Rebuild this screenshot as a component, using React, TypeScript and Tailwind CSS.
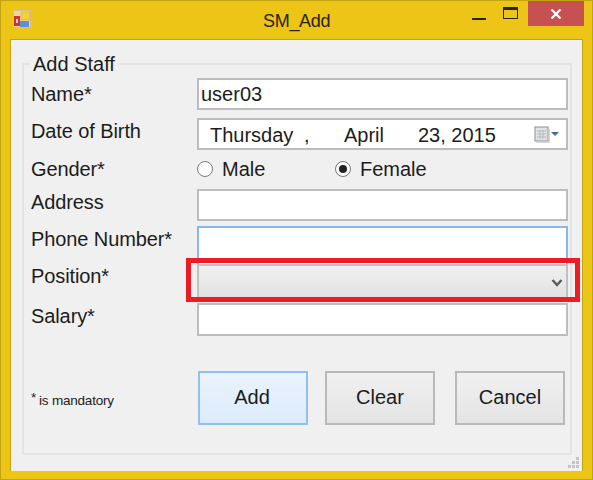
import React from "react";

const font = { fontFamily: '"Liberation Sans", Arial, sans-serif' };

function Row({ label, labelOffset, gap, height, children }: { label: string; labelOffset: string; gap: string; height: string; children: React.ReactNode }) {
  return (
    <div className={`flex ${gap} ${height}`}>
      <div className={`w-[166px] text-[20px] leading-[24px] text-[#1c1c1c] whitespace-nowrap tracking-[-0.1px] ${labelOffset}`}>{label}</div>
      <div className="w-[371px] h-full">{children}</div>
    </div>
  );
}

const box = "w-full h-full bg-white border-2 border-[#bcbcc0]";

export default function App() {
  return (
    <div style={font} className="relative w-[593px] h-[480px] bg-[#ecc517] border border-[#c2a312] flex flex-col overflow-hidden">
      <div className="h-[38px] flex items-start shrink-0">
        <svg className="ml-[12px] mt-[9px]" width="20" height="18" viewBox="0 0 20 18">
          <rect x="0.5" y="0.5" width="17" height="17" fill="#e6d9a0" stroke="#cfc48e" />
          <rect x="1" y="6" width="6" height="10" fill="#c9343a" />
          <rect x="3" y="9" width="2" height="4" fill="#f3c8c8" />
          <rect x="8" y="2" width="9" height="8" fill="#f5cf3e" stroke="#d6a920" strokeWidth="0.5" />
          <rect x="7" y="11" width="9" height="6" fill="#5d8fdc" />
        </svg>
        <div className="ml-[230px] mt-[9px] w-[80px] text-[18px] leading-[22px] text-[#2b2410] tracking-[-0.3px]">SM_Add</div>
        <div className="ml-[129px] mt-[17px] w-[14px] h-[2px] bg-[#2a2410]" />
        <div className="ml-[17px] mt-[6px] w-[15px] h-[12px] border border-[#2a2410] border-t-[3px]" />
        <div className="ml-[10px] mt-0 w-[56px] h-[25px] bg-[#c75050] flex items-center justify-center">
          <svg width="12" height="10" viewBox="0 0 12 10"><path d="M1.5 0.5 L10.5 9.5 M10.5 0.5 L1.5 9.5" stroke="#fff" strokeWidth="2.2" /></svg>
        </div>
      </div>

      <div className="ml-[9px] mr-[9px] h-[432px] bg-[#f0f0f0] border-t border-l border-r border-[#c2a312] pt-[23px] pl-[11px] pr-[11px] relative">
        <div className="relative w-[550px] h-[392px] border-2 border-[#e4e4e4] pl-[7px] pt-[13px]">
          <div className="absolute left-[6px] top-[-13px] px-[3px] bg-[#f0f0f0] text-[20px] leading-[24px] text-[#1c1c1c]">Add Staff</div>

          <div className="flex flex-col">
            <Row label="Name*" labelOffset="mt-[4px]" gap="" height="h-[32px]">
              <div className={`${box} text-[20px] leading-[24px] pl-[2px] pt-[2px] text-[#1c1c1c]`}>user03</div>
            </Row>
            <Row label="Date of Birth" labelOffset="mt-[1px]" gap="mt-[8px]" height="h-[32px]">
              <div className={`${box} relative text-[20px] leading-[24px] pt-[3px] text-[#1c1c1c]`}>
                <span className="absolute left-[11px]">Thursday</span>
                <span className="absolute left-[105px]">,</span>
                <span className="absolute left-[145px]">April</span>
                <span className="absolute left-[219px]">23, 2015</span>
                <svg className="absolute left-[335px] top-[6px]" width="30" height="18" viewBox="0 0 30 18">
                  <rect x="1" y="1" width="13" height="14" fill="#dfe2e6" stroke="#8f8f8f" />
                  <path d="M3 5h9M3 8h9M3 11h9M6 4v9M9 4v9" stroke="#b7bcc4" strokeWidth="1" />
                  <path d="M2 16h13V3" fill="none" stroke="#c9c9c9" strokeWidth="1.5" />
                  <path d="M17 6h8l-4 4z" fill="#4f6690" />
                </svg>
              </div>
            </Row>
            <div className="flex mt-[7px] h-[32px]">
              <div className="w-[166px] text-[20px] leading-[24px] text-[#1c1c1c] tracking-[-0.1px]">Gender*</div>
              <div className="flex items-start text-[20px] leading-[24px] text-[#1c1c1c]">
                <span className="w-[16px] h-[16px] mt-[4px] rounded-full bg-white border border-[#7a7a7a]" />
                <span className="ml-[9px] w-[113px]">Male</span>
                <span className="w-[16px] h-[16px] mt-[4px] rounded-full bg-white border border-[#7a7a7a] flex items-center justify-center">
                  <span className="w-[8px] h-[8px] rounded-full bg-[#222]" />
                </span>
                <span className="ml-[9px]">Female</span>
              </div>
            </div>
            <Row label="Address" labelOffset="mt-[1px]" gap="mt-[0px]" height="h-[32px]">
              <div className={box} />
            </Row>
            <Row label="Phone Number*" labelOffset="mt-[1px]" gap="mt-[5px]" height="h-[38px]">
              <div className="w-full h-full bg-white border-2 border-b-0 border-[#86b8ea]" />
            </Row>
            <Row label="Position*" labelOffset="mt-0" gap="mt-0" height="h-[37px]">
              <div className="w-full h-full bg-gradient-to-b from-[#f0f0f0] to-[#e1e1e1] border-2 border-[#c0c0c0] flex items-center justify-end pr-[3px]">
                <svg width="12" height="10" viewBox="0 0 12 10"><path d="M1.5 2 L6 7 L10.5 2" fill="none" stroke="#5a5a5a" strokeWidth="2.4" /></svg>
              </div>
            </Row>
            <Row label="Salary*" labelOffset="mt-[1px]" gap="mt-[2px]" height="h-[33px]">
              <div className={box} />
            </Row>
          </div>

          <div className="flex items-start mt-[35px]">
            <div className="w-[167px] flex text-[13.5px] leading-[16px] text-[#1c1c1c] mt-[22px] whitespace-nowrap tracking-[-0.2px]">
              <span className="w-[8px] mt-[-3px]">*</span>
              <span>is mandatory</span>
            </div>
            <button className="w-[110px] h-[54px] pb-[2px] pr-[2px] border-2 border-[#90c0ee] bg-gradient-to-b from-[#eaf3fc] to-[#dcebfb] text-[20px] text-[#1c1c1c]">Add</button>
            <button className="ml-[17px] w-[110px] h-[54px] pb-[2px] border-2 border-[#b9b9b9] bg-gradient-to-b from-[#f0f0f0] to-[#e4e4e4] text-[20px] text-[#1c1c1c]">Clear</button>
            <button className="ml-[20px] w-[110px] h-[54px] pb-[2px] border-2 border-[#b9b9b9] bg-gradient-to-b from-[#f0f0f0] to-[#e4e4e4] text-[20px] text-[#1c1c1c]">Cancel</button>
          </div>
        </div>
        <svg className="absolute right-[2px] bottom-[2px]" width="12" height="12" viewBox="0 0 12 12">
          <path d="M8 0h3v3H8zM4 4h3v3H4zM8 4h3v3H8zM0 8h3v3H0zM4 8h3v3H4zM8 8h3v3H8z" fill="#c4c4c4" />
        </svg>
      </div>

      <div className="absolute left-[185px] top-[257px] w-[394px] h-[44px] border-[5px] border-[#ed1c24]" />
    </div>
  );
}
